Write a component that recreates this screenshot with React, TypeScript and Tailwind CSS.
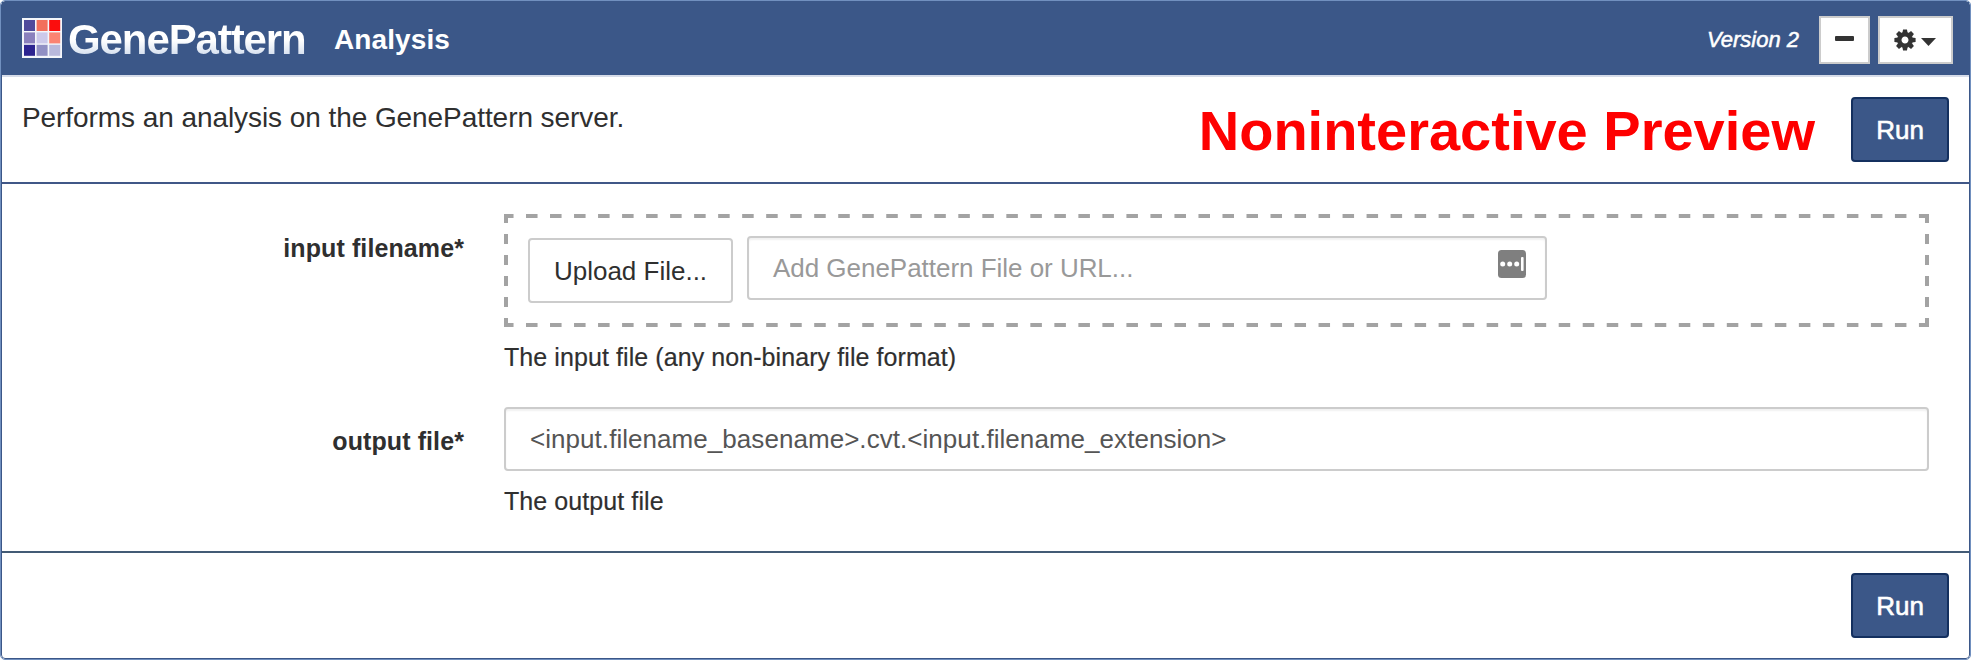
import React from "react";

const LOGO_CELLS = [
  "#4f4a9c", "#f2705c", "#fb0d0d",
  "#8a80bd", "#ccc9ea", "#fb8373",
  "#2c2490", "#9190c4", "#b9b9dc",
];

function LogoMark() {
  return (
    <svg width="40" height="40" viewBox="0 0 40 40" className="mt-4 shrink-0">
      <rect width="40" height="40" fill="#f4f6fa" />
      {LOGO_CELLS.map((fill, i) => (
        <rect key={i} x={2 + (i % 3) * 12.6} y={2 + Math.floor(i / 3) * 12.4} width="11" height="11" fill={fill} />
      ))}
    </svg>
  );
}

function RunButton() {
  return (
    <button className="h-[65px] w-[98px] shrink-0 rounded-[4px] border-2 border-[#14305f] bg-[#3b5788] pt-px text-[26px] text-white [-webkit-text-stroke:0.6px_white]">
      Run
    </button>
  );
}

function Row({ label, labelClass, children }: { label: string; labelClass: string; children: React.ReactNode }) {
  return (
    <div className="flex">
      <div className={"w-[462px] shrink-0 text-right text-[25px] font-bold leading-9 tracking-[0.1px] " + labelClass}>{label}</div>
      <div className="ml-10 w-[1425px]">{children}</div>
    </div>
  );
}

function Help({ children }: { children: React.ReactNode }) {
  return <p className="mt-3 text-[25px] leading-9 tracking-[0.08px] [-webkit-text-stroke:0.2px_#333]">{children}</p>;
}

const DASHES =
  "bg-[linear-gradient(90deg,#a3a3a3_50%,transparent_50%),linear-gradient(90deg,#a3a3a3_50%,transparent_50%),linear-gradient(#a3a3a3_50%,transparent_50%),linear-gradient(#a3a3a3_50%,transparent_50%)] bg-[length:24.017px_4px,24.017px_4px,4px_21px,4px_21px] [background-position:-2px_0,-2px_100%,0_-1px,100%_-1px] [background-repeat:repeat-x,repeat-x,repeat-y,repeat-y]";

export default function App() {
  return (
    <div className="h-[660px] w-[1971px] overflow-hidden rounded-[5px] border border-[#7190bf] bg-white font-['Liberation_Sans',Arial,sans-serif] text-[#2f2f2f]">
      <div className="flex h-full flex-col rounded-[4px] border border-[#3b5788]">
        <header className="flex h-[75px] shrink-0 items-start border-b-2 border-[#d6dce9] bg-[#3b5788] pl-5 pr-4 text-white">
          <LogoMark />
          <span className="ml-1.5 mt-[18px] w-[266px] whitespace-nowrap bg-linear-to-b from-white from-50% to-[#d3deee] to-90% bg-clip-text text-[42px] font-bold leading-10 tracking-[-1.1px] text-transparent">
            GenePattern
          </span>
          <span className="mt-[18px] text-[28px] font-bold leading-10 tracking-[0.1px]">Analysis</span>
          <span className="ml-auto mt-[18px] text-[22px] italic leading-10 [-webkit-text-stroke:0.5px_white]">Version 2</span>
          <button className="ml-5 mt-3.5 flex h-12 w-[51px] items-center justify-center border-2 border-[#ccc] bg-white">
            <span className="mb-[3px] h-[5px] w-[19px] rounded-[1px] bg-[#333]" />
          </button>
          <button className="ml-2 mt-3.5 flex h-12 w-[75px] items-center border-2 border-[#ccc] bg-white pl-3.5 text-[#333]">
            <svg width="22" height="22" viewBox="-11 -11 22 22" className="mb-px">
              {[0, 45, 90, 135, 180, 225, 270, 315].map((a) => (
                <path key={a} d="M-2.6-7 L-2-10.6 H2 L2.6-7Z" fill="#333" transform={`rotate(${a})`} />
              ))}
              <circle r="5.7" fill="none" stroke="#333" strokeWidth="4.4" />
            </svg>
            <svg width="15" height="8" viewBox="0 0 16 8" preserveAspectRatio="none" className="ml-[5px] mt-1">
              <path d="M0 0H16L8 8Z" fill="#333" />
            </svg>
          </button>
        </header>

        <section className="flex h-[107px] shrink-0 items-start border-b-2 border-[#405787] pl-5 pr-5 pt-5">
          <p className="mt-px text-[28px] leading-10 tracking-[-0.07px]">Performs an analysis on the GenePattern server.</p>
          <span className="ml-auto mr-9 mt-0.5 whitespace-nowrap text-[56px] font-bold leading-[64px] text-[#fe0000]">
            Noninteractive Preview
          </span>
          <RunButton />
        </section>

        <section className="h-[369px] shrink-0 border-b-2 border-[#435b75] pt-[30px]">
          <Row label="input filename*" labelClass="pt-4">
            <div className={"flex h-[113px] items-start pl-6 pt-[22px] " + DASHES}>
              <button className="mt-0.5 h-[65px] w-[205px] rounded-[4px] border-2 border-[#ccc] bg-white pt-px text-[26px]">
                Upload File...
              </button>
              <div className="ml-[14px] flex h-16 w-[800px] items-center justify-between rounded-[4px] border-2 border-[#ccc] bg-white pl-6 pr-[19px] text-[26px] tracking-[-0.03px] text-[#999] shadow-[inset_0_2px_2px_rgba(0,0,0,0.06)]">
                <span>Add GenePattern File or URL...</span>
                <svg width="28" height="28" viewBox="0 0 28 28" className="mb-2">
                  <rect width="28" height="28" rx="3.5" fill="#7f7f7f" />
                  <circle cx="4.7" cy="14" r="2.5" fill="#fff" />
                  <circle cx="11.7" cy="14" r="2.5" fill="#fff" />
                  <circle cx="18.7" cy="14" r="2.5" fill="#fff" />
                  <rect x="23" y="7" width="2.6" height="14" rx="1" fill="#fff" />
                </svg>
              </div>
            </div>
            <Help>The input file (any non-binary file format)</Help>
          </Row>
          <div className="h-8" />
          <Row label="output file*" labelClass="pt-4">
            <div className="flex h-16 items-center rounded-[4px] border-2 border-[#ccc] pl-6 text-[26px] tracking-[0.05px] text-[#555] shadow-[inset_0_2px_2px_rgba(0,0,0,0.06)]">
              {"<input.filename_basename>.cvt.<input.filename_extension>"}
            </div>
            <Help>The output file</Help>
          </Row>
        </section>

        <footer className="flex justify-end pr-5 pt-5">
          <RunButton />
        </footer>
      </div>
    </div>
  );
}
